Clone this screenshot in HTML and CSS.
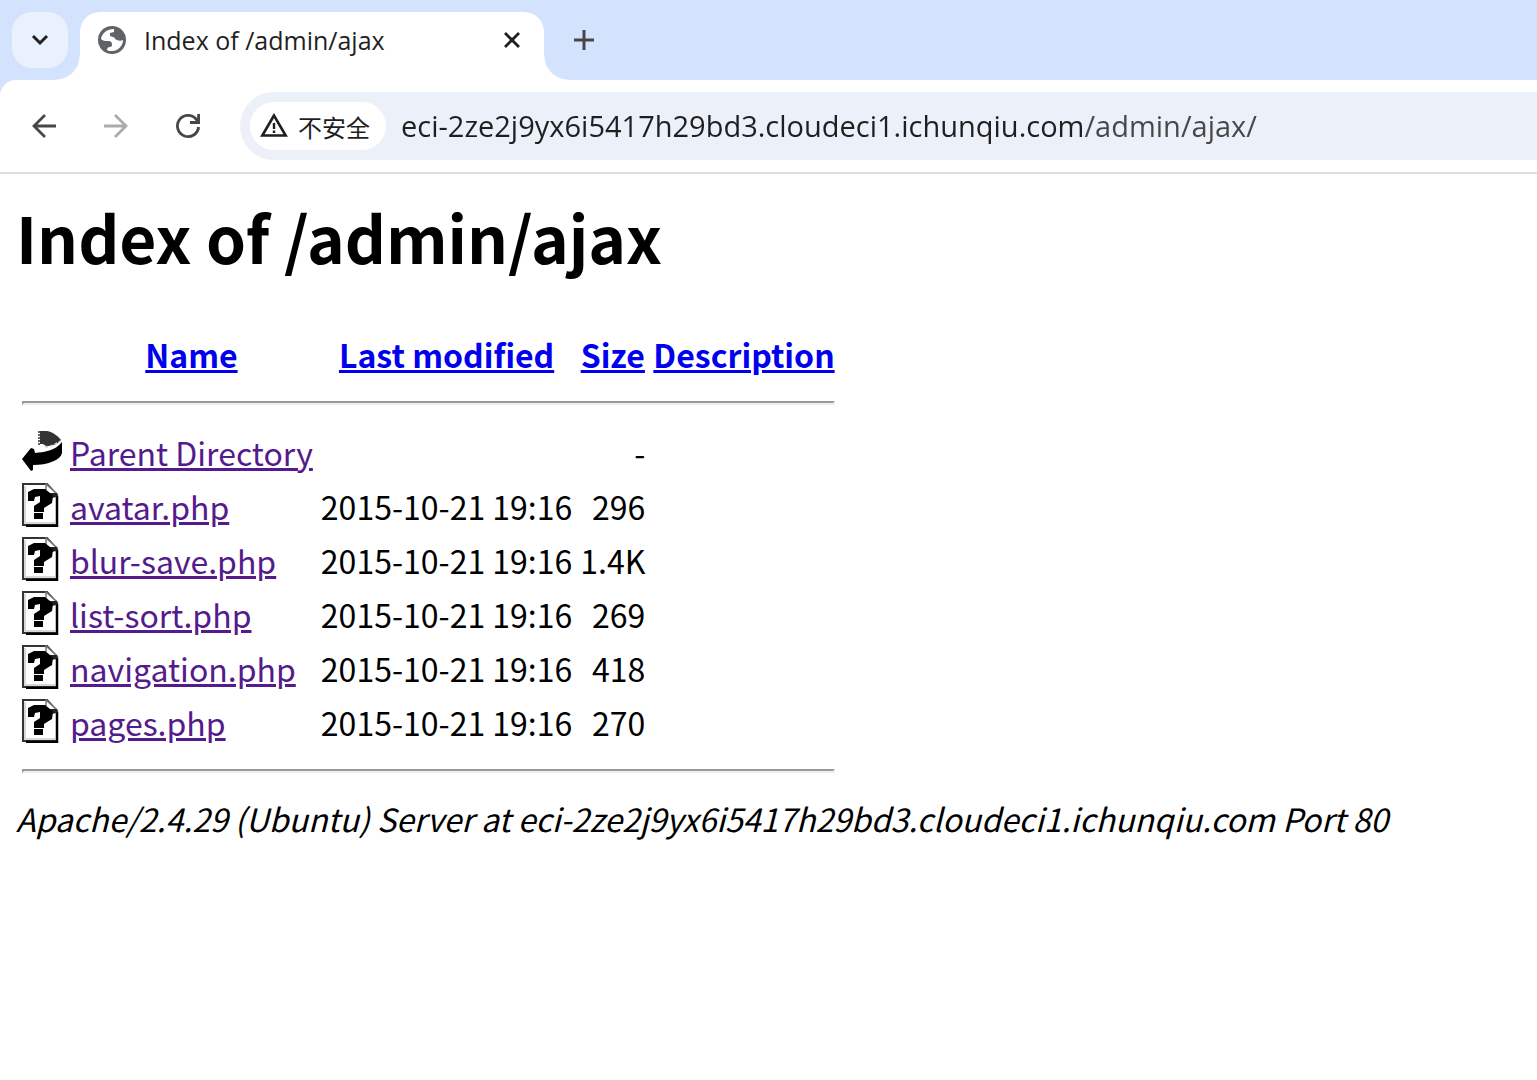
FILE: index.html
```
<!doctype html>
<html lang="zh-CN">
	<head>
		<meta charset="utf-8">
		<title>Index of /admin/ajax</title>
		<link rel="stylesheet" href="styles.css">
	</head>
	<body>

		<!-- icons shared by the listing rows -->
		<svg class="defs" width="0" height="0" aria-hidden="true">
			<symbol id="unknown" viewBox="0 0 40 44">
				<path d="M1 1h24l10 11v30H1z" fill="#fff" stroke="#333" stroke-width="2"/>
				<path d="M3 3v37h30" fill="none" stroke="#ccc" stroke-width="1.5"/>
				<path d="M4 43h31V13" fill="none" stroke="#000" stroke-width="2.5"/>
				<path d="M24 1v10h11z" fill="#fff" stroke="#777" stroke-width="1.5"/>
				<path d="M24 10h11v4l-6 1z" fill="#222"/>
				<path d="M6 9l6-3h11l5 4 3 3-1 7-8 5v4H12v-6l6-4v-6l-5 1-1 4H6z" fill="#000"/>
				<path d="M12 30h9v6h-9z" fill="#000"/>
			</symbol>
			<symbol id="back" viewBox="0 0 40 44">
				<path d="M18 2h7c6 1 11 5 14 9-4 4-8 6-15 6l-3-2h-3z" fill="#333"/>
				<path d="M17 2v14" stroke="#666" stroke-width="2" stroke-dasharray="2 1"/>
				<path d="M40 13v11c-1 4-4 6-8 8-7 3-14 4-21 4v5l-2 1-9-12 9-11 3 1 1 4c9-1 20-2 27-11z" fill="#000"/>
				<path d="M23 18c7-1 11-3 15-6" fill="none" stroke="#ccc" stroke-width="1.5" stroke-dasharray="3 2"/>
			</symbol>
		</svg>

		<header class="browser">
			<div class="tabstrip">
				<button class="tab-search" aria-label="Search tabs">
					<svg width="24" height="24" viewBox="0 0 24 24"><path d="M5 8l7 7 7-7" fill="none" stroke="#1f1f1f" stroke-width="3"/></svg>
				</button>
				<div class="tab">
					<svg class="favicon" width="28" height="28" viewBox="0 0 28 28">
						<circle cx="14" cy="14" r="14" fill="#5f6368"/>
						<path d="M3 13C4 7 9 3 16 3v3l-4 1v3l3 1c2 0 2 3 4 3 2 1 4 1 6 0 0 6-5 11-11 11-2 0-4 0-5-1 0-2 1-3 3-3 1 0 2-1 2-2 0-3-1-4-4-4-3 0-5 0-7-2z" fill="#fff"/>
					</svg>
					<span class="tab-title">Index of /admin/ajax</span>
					<button class="tab-close" aria-label="Close tab">
						<svg width="24" height="24" viewBox="0 0 24 24"><path d="M5 5l14 14M19 5L5 19" fill="none" stroke="#1f1f1f" stroke-width="2.8"/></svg>
					</button>
				</div>
				<button class="tab-new" aria-label="New tab">
					<svg width="24" height="24" viewBox="0 0 24 24"><path d="M12 2v20M2 12h20" fill="none" stroke="#474747" stroke-width="3"/></svg>
				</button>
			</div>

			<form class="toolbar">
				<button type="button" class="nav-button" aria-label="Back">
					<svg width="32" height="32" viewBox="0 0 32 32"><path d="M28 16H6M17 5L6 16l11 11" fill="none" stroke="#474747" stroke-width="2.8"/></svg>
				</button>
				<button type="button" class="nav-button" aria-label="Forward" disabled>
					<svg width="32" height="32" viewBox="0 0 32 32"><path d="M4 16h22M15 5l11 11-11 11" fill="none" stroke="#ababab" stroke-width="2.8"/></svg>
				</button>
				<button type="button" class="nav-button" aria-label="Reload">
					<svg width="32" height="32" viewBox="0 0 32 32"><path d="M26.600 17A10.600 10.600 0 1 1 24 9l2.500 3M18 12.500h8.600V4" fill="none" stroke="#474747" stroke-width="2.800"/></svg>
				</button>
				<div class="omnibox">
					<button type="button" class="site-info">
						<svg width="28" height="28" viewBox="0 0 28 28"><path d="M14 3.500L2.300 23.500h23.400z" fill="none" stroke="#1f1f1f" stroke-width="2.600"/><path d="M14 11v6M14 18.500v2.500" stroke="#1f1f1f" stroke-width="2.400"/></svg>
						<span>不安全</span>
					</button>
					<input class="url" type="text" aria-label="Address" value="eci-2ze2j9yx6i5417h29bd3.cloudeci1.ichunqiu.com/admin/ajax/">
				</div>
			</form>
		</header>

		<main class="listing">
			<h1>Index of /admin/ajax</h1>
			<table>
				<tr>
					<th></th>
					<th><a href="?C=N;O=D">Name</a></th>
					<th><a href="?C=M;O=A">Last modified</a></th>
					<th><a href="?C=S;O=A">Size</a></th>
					<th><a href="?C=D;O=A">Description</a></th>
				</tr>
				<tr><td colspan="5"><hr></td></tr>
				<tr>
					<td class="type"><svg class="icon"><use href="#back"/></svg></td>
					<td><a class="visited" href="/admin/">Parent Directory</a></td>
					<td></td>
					<td class="num">-</td>
					<td></td>
				</tr>
				<tr>
					<td class="type"><svg class="icon"><use href="#unknown"/></svg></td>
					<td><a class="visited" href="avatar.php">avatar.php</a></td>
					<td class="num">2015-10-21 19:16</td>
					<td class="num">296</td>
					<td></td>
				</tr>
				<tr>
					<td class="type"><svg class="icon"><use href="#unknown"/></svg></td>
					<td><a class="visited" href="blur-save.php">blur-save.php</a></td>
					<td class="num">2015-10-21 19:16</td>
					<td class="num">1.4K</td>
					<td></td>
				</tr>
				<tr>
					<td class="type"><svg class="icon"><use href="#unknown"/></svg></td>
					<td><a class="visited" href="list-sort.php">list-sort.php</a></td>
					<td class="num">2015-10-21 19:16</td>
					<td class="num">269</td>
					<td></td>
				</tr>
				<tr>
					<td class="type"><svg class="icon"><use href="#unknown"/></svg></td>
					<td><a class="visited" href="navigation.php">navigation.php</a></td>
					<td class="num">2015-10-21 19:16</td>
					<td class="num">418</td>
					<td></td>
				</tr>
				<tr>
					<td class="type"><svg class="icon"><use href="#unknown"/></svg></td>
					<td><a class="visited" href="pages.php">pages.php</a></td>
					<td class="num">2015-10-21 19:16</td>
					<td class="num">270</td>
					<td></td>
				</tr>
				<tr><td colspan="5"><hr></td></tr>
			</table>
			<address>Apache/2.4.29 (Ubuntu) Server at eci-2ze2j9yx6i5417h29bd3.cloudeci1.ichunqiu.com Port 80</address>
		</main>

	</body>
</html>
```

FILE: styles.css
```
body {
	margin: 0;
	background: #fff;
	color: #000;
	font-family: "Noto Sans CJK SC", sans-serif;
}

button {
	display: flex;
	align-items: center;
	justify-content: center;
	border: none;
	padding: 0;
	background: none;
	color: #1f1f1f;
}

svg {
	display: block;
	flex: none;
}

.defs {
	position: absolute;
}

/* browser frame */
.browser {
	background: #d3e3fd;
	font-family: "Open Sans", "Noto Sans CJK SC", sans-serif;
	color: #1f1f1f;
}

.tabstrip {
	display: flex;
	align-items: center;
	height: 80px;
	padding-left: 12px;
}

.tab-search {
	width: 56px;
	height: 56px;
	margin-right: 12px;
	border-radius: 20px;
	background: #e9f1fe;
}

.tab {
	position: relative;
	display: flex;
	align-items: center;
	align-self: flex-end;
	box-sizing: border-box;
	width: 464px;
	height: 68px;
	padding: 0 20px 12px 18px;
	border-radius: 20px 20px 0 0;
	background: #fff;
}
/* flared feet of the active tab */
.tab::before,
.tab::after {
	content: "";
	position: absolute;
	bottom: 0;
	width: 24px;
	height: 24px;
}
.tab::before {
	right: 100%;
	background: radial-gradient(circle at 0 0, transparent 23px, #fff 24px);
}
.tab::after {
	left: 100%;
	background: radial-gradient(circle at 100% 0, transparent 23px, #fff 24px);
}

.tab-title {
	flex: 1;
	margin-left: 18px;
	font-size: 25px;
	line-height: 32px;
	white-space: nowrap;
}

.tab-new {
	margin-left: 28px;
}

.toolbar {
	display: flex;
	align-items: center;
	gap: 16px;
	margin: 0;
	padding: 12px 0 12px 16px;
	border-bottom: 2px solid #e0e0e0;
	border-top-left-radius: 16px;
	background: #fff;
}

.nav-button {
	width: 56px;
	height: 56px;
}

.omnibox {
	display: flex;
	align-items: center;
	flex: 1;
	box-sizing: border-box;
	height: 68px;
	margin-left: 8px;
	padding-left: 10px;
	border-radius: 34px 0 0 34px;
	background: #ebf0f9;
}

.site-info {
	gap: 10px;
	height: 48px;
	padding: 0 16px 0 10px;
	border-radius: 24px;
	background: #fff;
	font-family: "Noto Sans CJK SC", sans-serif;
	font-size: 24px;
	white-space: nowrap;
}

.url {
	flex: 1;
	min-width: 0;
	margin-left: 15px;
	border: none;
	outline: none;
	padding: 0;
	/* the path is dimmer than the host */
	background: linear-gradient(to right, #1f1f1f 682px, #474747 682px);
	-webkit-background-clip: text;
	background-clip: text;
	color: transparent;
	font-family: "Open Sans", sans-serif;
	font-size: 29px;
	line-height: 38px;
}

/* directory listing */
.listing {
	padding: 16px;
	font-size: 32px;
}

.listing h1 {
	margin: 0 0 43px;
	font-size: 64px;
}

.listing table {
	border-spacing: 4px;
}

.listing th,
.listing td {
	padding: 2px;
	white-space: nowrap;
}

.listing a {
	color: #0000ee;
}
.listing a.visited {
	color: #551a8b;
}

.listing .num {
	text-align: right;
}

.listing .type {
	vertical-align: top;
}

.listing hr {
	margin: 16px 0;
	border: 2px inset #eee;
}

.icon {
	width: 40px;
	height: 44px;
}

address {
	font-style: italic;
}
```
